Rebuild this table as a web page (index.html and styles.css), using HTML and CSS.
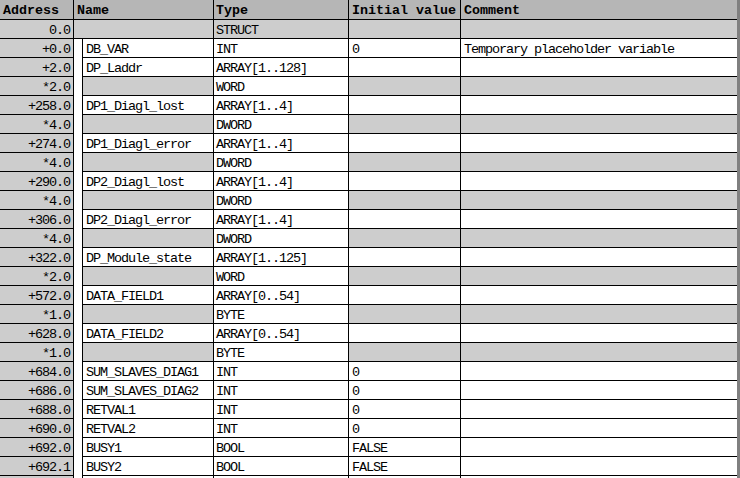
FILE: index.html
```html
<!DOCTYPE html>
<html>
<head>
<meta charset="utf-8">
<link rel="stylesheet" href="styles.css">
</head>
<body>
<div class="table">
  <div class="row head">
    <div class="c addr">Address</div>
    <div class="c name">Name</div>
    <div class="c type">Type</div>
    <div class="c init">Initial value</div>
    <div class="c comm">Comment</div>
  </div>
  <div class="row struct">
    <div class="c addr">0.0</div>
    <div class="c name"></div>
    <div class="c type">STRUCT</div>
    <div class="c init"></div>
    <div class="c comm"></div>
  </div>
  <div class="row"><div class="c addr">+0.0</div><div class="strip"></div><div class="c name">DB_VAR</div><div class="c type">INT</div><div class="c init">0</div><div class="c comm">Temporary placeholder variable</div></div>
  <div class="row"><div class="c addr">+2.0</div><div class="strip"></div><div class="c name">DP_Laddr</div><div class="c type">ARRAY[1..128]</div><div class="c init"></div><div class="c comm"></div></div>
  <div class="row sub"><div class="c addr">*2.0</div><div class="strip"></div><div class="c name"></div><div class="c type">WORD</div><div class="c init"></div><div class="c comm"></div></div>
  <div class="row"><div class="c addr">+258.0</div><div class="strip"></div><div class="c name">DP1_Diagl_lost</div><div class="c type">ARRAY[1..4]</div><div class="c init"></div><div class="c comm"></div></div>
  <div class="row sub"><div class="c addr">*4.0</div><div class="strip"></div><div class="c name"></div><div class="c type">DWORD</div><div class="c init"></div><div class="c comm"></div></div>
  <div class="row"><div class="c addr">+274.0</div><div class="strip"></div><div class="c name">DP1_Diagl_error</div><div class="c type">ARRAY[1..4]</div><div class="c init"></div><div class="c comm"></div></div>
  <div class="row sub"><div class="c addr">*4.0</div><div class="strip"></div><div class="c name"></div><div class="c type">DWORD</div><div class="c init"></div><div class="c comm"></div></div>
  <div class="row"><div class="c addr">+290.0</div><div class="strip"></div><div class="c name">DP2_Diagl_lost</div><div class="c type">ARRAY[1..4]</div><div class="c init"></div><div class="c comm"></div></div>
  <div class="row sub"><div class="c addr">*4.0</div><div class="strip"></div><div class="c name"></div><div class="c type">DWORD</div><div class="c init"></div><div class="c comm"></div></div>
  <div class="row"><div class="c addr">+306.0</div><div class="strip"></div><div class="c name">DP2_Diagl_error</div><div class="c type">ARRAY[1..4]</div><div class="c init"></div><div class="c comm"></div></div>
  <div class="row sub"><div class="c addr">*4.0</div><div class="strip"></div><div class="c name"></div><div class="c type">DWORD</div><div class="c init"></div><div class="c comm"></div></div>
  <div class="row"><div class="c addr">+322.0</div><div class="strip"></div><div class="c name">DP_Module_state</div><div class="c type">ARRAY[1..125]</div><div class="c init"></div><div class="c comm"></div></div>
  <div class="row sub"><div class="c addr">*2.0</div><div class="strip"></div><div class="c name"></div><div class="c type">WORD</div><div class="c init"></div><div class="c comm"></div></div>
  <div class="row"><div class="c addr">+572.0</div><div class="strip"></div><div class="c name">DATA_FIELD1</div><div class="c type">ARRAY[0..54]</div><div class="c init"></div><div class="c comm"></div></div>
  <div class="row sub"><div class="c addr">*1.0</div><div class="strip"></div><div class="c name"></div><div class="c type">BYTE</div><div class="c init"></div><div class="c comm"></div></div>
  <div class="row"><div class="c addr">+628.0</div><div class="strip"></div><div class="c name">DATA_FIELD2</div><div class="c type">ARRAY[0..54]</div><div class="c init"></div><div class="c comm"></div></div>
  <div class="row sub"><div class="c addr">*1.0</div><div class="strip"></div><div class="c name"></div><div class="c type">BYTE</div><div class="c init"></div><div class="c comm"></div></div>
  <div class="row"><div class="c addr">+684.0</div><div class="strip"></div><div class="c name">SUM_SLAVES_DIAG1</div><div class="c type">INT</div><div class="c init">0</div><div class="c comm"></div></div>
  <div class="row"><div class="c addr">+686.0</div><div class="strip"></div><div class="c name">SUM_SLAVES_DIAG2</div><div class="c type">INT</div><div class="c init">0</div><div class="c comm"></div></div>
  <div class="row"><div class="c addr">+688.0</div><div class="strip"></div><div class="c name">RETVAL1</div><div class="c type">INT</div><div class="c init">0</div><div class="c comm"></div></div>
  <div class="row"><div class="c addr">+690.0</div><div class="strip"></div><div class="c name">RETVAL2</div><div class="c type">INT</div><div class="c init">0</div><div class="c comm"></div></div>
  <div class="row"><div class="c addr">+692.0</div><div class="strip"></div><div class="c name">BUSY1</div><div class="c type">BOOL</div><div class="c init">FALSE</div><div class="c comm"></div></div>
  <div class="row"><div class="c addr">+692.1</div><div class="strip"></div><div class="c name">BUSY2</div><div class="c type">BOOL</div><div class="c init">FALSE</div><div class="c comm"></div></div>
  <div class="row"><div class="c addr"></div><div class="strip"></div><div class="c name"></div><div class="c type"></div><div class="c init"></div><div class="c comm"></div></div>
</div>
</body>
</html>
```

FILE: styles.css
```css
html, body {
  margin: 0;
  padding: 0;
  background: #ffffff;
  overflow: hidden;
}

.table {
  width: 740px;
  box-sizing: border-box;
  border-right: 3px solid #808080;
  font-family: "Liberation Mono", "DejaVu Sans Mono", monospace;
  font-size: 13.5px;
  letter-spacing: -1.1px;
  color: #000;
}

.row {
  display: grid;
  grid-template-columns: 74px 8px 132px 135px 112px 276px;
  height: 19px;
}

.c {
  box-sizing: border-box;
  height: 19px;
  line-height: 18px;
  padding-top: 2px;
  border-bottom: 1px solid #000;
  white-space: nowrap;
  overflow: hidden;
  padding-left: 3px;
}

.strip {
  background: #fff;
}

.addr {
  background: #cdcdcd;
  border-right: 1px solid #000;
  text-align: right;
  padding-left: 0;
  padding-right: 3px;
}

.name {
  border-left: 1px solid #000;
  border-right: 1px solid #000;
  padding-left: 3px;
}

.type {
  border-right: 1px solid #000;
  padding-left: 2px;
}

.init {
  border-right: 1px solid #000;
  padding-left: 3px;
}

.comm {
  padding-left: 3px;
}

.head {
  height: 20px;
}

.head .c {
  height: 20px;
  line-height: 19px;
  padding-top: 1px;
  background: #b6b6b6;
  font-weight: bold;
  font-size: 13.33px;
  letter-spacing: 0;
}

.head .addr {
  text-align: left;
  padding-left: 3px;
  padding-right: 0;
}

.head .name {
  grid-column: 2 / 4;
  border-left: none;
  padding-left: 3px;
}

.struct .c {
  background: #cdcdcd;
}

.struct .name {
  grid-column: 2 / 4;
  border-left: none;
}

.sub .name,
.sub .init,
.sub .comm {
  background: #cdcdcd;
}
```
